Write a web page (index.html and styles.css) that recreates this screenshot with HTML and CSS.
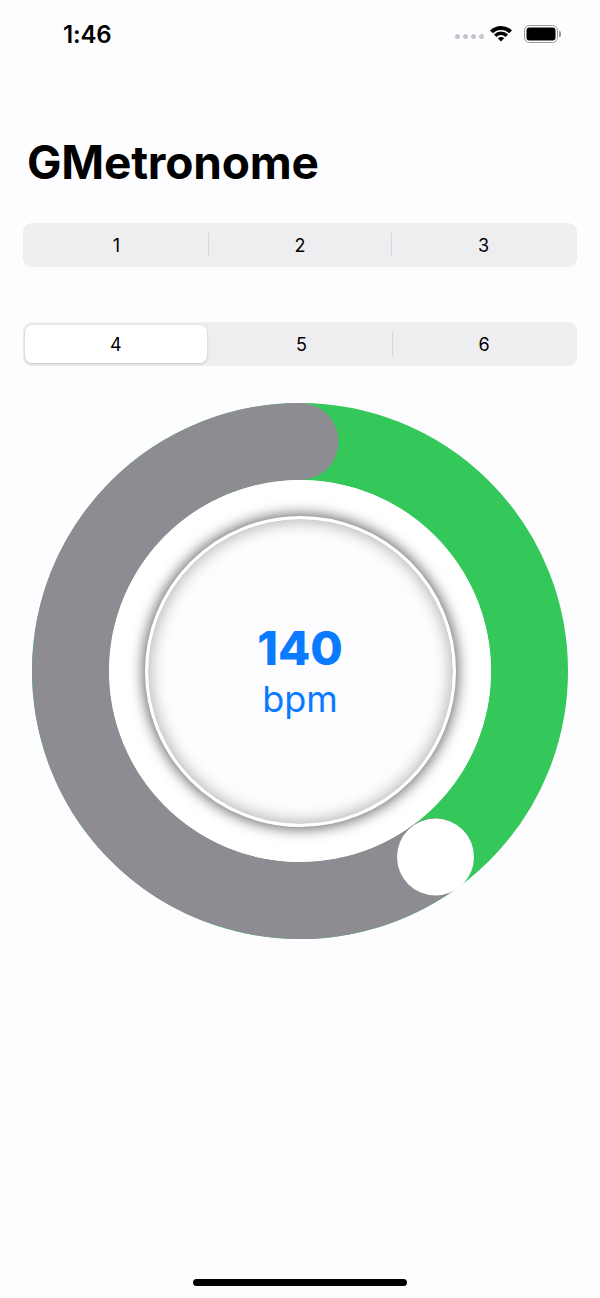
FILE: index.html
```html
<!DOCTYPE html>
<html>
<head>
<meta charset="utf-8">
<link rel="stylesheet" href="styles.css">
</head>
<body>
<div class="screen">
  <div class="status">
    <span class="time">1:46</span>
    <div class="indicators">
      <div class="dots"><span></span><span></span><span></span><span></span></div>
      <svg class="wifi" width="22" height="16" viewBox="0 0 22 16">
        <path d="M0.04 4.54 A15.5 15.5 0 0 1 21.96 4.54 L19.13 7.37 A11.5 11.5 0 0 0 2.87 7.37 Z" fill="#000"/>
        <path d="M3.93 8.43 A10 10 0 0 1 18.07 8.43 L15.6 10.9 A6.5 6.5 0 0 0 6.4 10.9 Z" fill="#000"/>
        <path d="M11 15.5 L7.82 12.32 A4.5 4.5 0 0 1 14.18 12.32 Z" fill="#000"/>
      </svg>
      <svg class="battery" width="38" height="18" viewBox="0 0 38 18">
        <rect x="0.5" y="0.5" width="33" height="17" rx="5" fill="none" stroke="#9a999e" stroke-width="1"/>
        <rect x="2.5" y="2.5" width="29" height="13" rx="3" fill="#000"/>
        <path d="M35 6 h0.5 a1.5 1.5 0 0 1 1.5 1.5 v3 a1.5 1.5 0 0 1 -1.5 1.5 h-0.5 Z" fill="#9a999e"/>
      </svg>
    </div>
  </div>

  <h1 class="title">GMetronome</h1>

  <div class="seg seg-first">
    <div class="seg-item">1</div>
    <div class="sep"></div>
    <div class="seg-item">2</div>
    <div class="sep"></div>
    <div class="seg-item">3</div>
  </div>

  <div class="seg seg-second">
    <div class="seg-item selected">4</div>
    <div class="sep hidden"></div>
    <div class="seg-item">5</div>
    <div class="sep"></div>
    <div class="seg-item">6</div>
  </div>

  <div class="dial">
    <svg class="ring" width="538" height="538" viewBox="0 0 538 538">
      <circle cx="269" cy="269" r="229.5" fill="none" stroke="#34c759" stroke-width="77"/>
      <path d="M403.9 454.7 A229.5 229.5 0 1 1 269 39.5" fill="none" stroke="#8e8c93" stroke-width="77" stroke-linecap="round"/>
      <circle cx="269" cy="269" r="191" fill="#ffffff"/>
      <circle cx="404.5" cy="455" r="38.5" fill="#ffffff"/>
    </svg>
    <div class="disc">
      <div class="bpm-value">140</div>
      <div class="bpm-unit">bpm</div>
    </div>
  </div>

  <div class="home"></div>
</div>
</body>
</html>
```

FILE: styles.css
```css
* { box-sizing: border-box; }

html, body {
  margin: 0;
  padding: 0;
  background: #fdfcff;
}

body {
  font-family: "Inter", "Noto Sans", "Liberation Sans", sans-serif;
  color: #000;
}

.screen {
  width: 600px;
  min-height: 1298px;
  display: flex;
  flex-direction: column;
}

.status {
  height: 68px;
  display: flex;
  align-items: center;
  justify-content: space-between;
  padding: 0 38px 0 63px;
}

.time {
  font-size: 24px;
  font-weight: 600;
  letter-spacing: -0.2px;
}

.indicators {
  display: flex;
  align-items: center;
  gap: 6px;
}

.dots {
  display: flex;
  gap: 3px;
  margin-top: 4px;
}

.dots span {
  width: 5px;
  height: 5px;
  border-radius: 50%;
  background: #c7c6cb;
}

.wifi { display: block; }
.battery { display: block; margin-left: 6px; }

.title {
  margin: 66px 0 0;
  padding-left: 27px;
  font-size: 46px;
  line-height: 56px;
  font-weight: 700;
  letter-spacing: -0.2px;
}

.seg {
  margin: 0 23px;
  height: 44px;
  background: #eeedf0;
  border-radius: 9px;
  display: flex;
  align-items: stretch;
  padding: 2px;
}

.seg-first { margin-top: 33px; }
.seg-second { margin-top: 55px; }

.seg-item {
  flex: 1;
  display: flex;
  align-items: center;
  justify-content: center;
  font-size: 18px;
  font-weight: 400;
}

.seg-item.selected {
  background: #ffffff;
  border-radius: 7px;
  margin: 1px 3px 1px 0;
  box-shadow: 0 1px 3px rgba(0, 0, 0, 0.14), 0 0 0 0.5px rgba(0, 0, 0, 0.05);
}

.sep {
  width: 1px;
  background: #d6d5d9;
  align-self: center;
  height: 24px;
}

.sep.hidden { background: transparent; }

.dial {
  margin: 36px auto 0;
  width: 538px;
  height: 538px;
  display: grid;
  place-items: center;
}

.ring {
  grid-area: 1 / 1;
  display: block;
}

.disc {
  grid-area: 1 / 1;
  width: 311px;
  height: 311px;
  border-radius: 50%;
  background: #fdfcff;
  border: 3px solid #ffffff;
  box-shadow:
    0 0 14px 2px rgba(0, 0, 0, 0.6),
    inset 0 0 16px 2px rgba(0, 0, 0, 0.3);
  display: flex;
  flex-direction: column;
  align-items: center;
  justify-content: center;
  padding-bottom: 2px;
  color: #0a7aff;
}

.bpm-value {
  font-size: 47px;
  line-height: 48px;
  font-weight: 800;
}

.bpm-unit {
  font-size: 36px;
  line-height: 36px;
  font-weight: 400;
  margin-top: 9px;
}

.home {
  margin: auto auto 12px;
  width: 214px;
  height: 7px;
  border-radius: 4px;
  background: #000;
}
```
